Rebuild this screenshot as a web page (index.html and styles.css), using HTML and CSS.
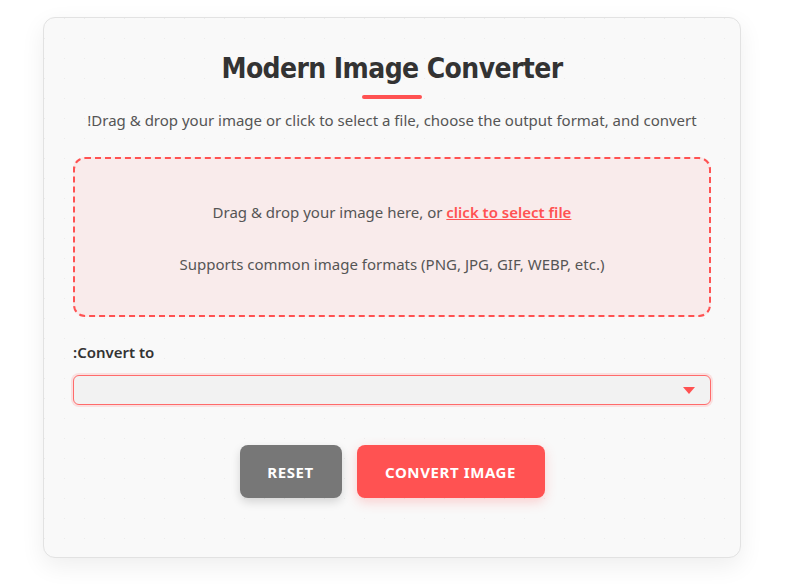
FILE: index.html
```html
<!DOCTYPE html>
<html lang="en">
<head>
<meta charset="utf-8">
<title>Modern Image Converter</title>
<link rel="stylesheet" href="styles.css">
</head>
<body>
<div class="page">
  <main class="card">
    <h1 class="title">Modern Image Converter</h1>
    <div class="title-bar"></div>
    <p class="subtitle">!Drag &amp; drop your image or click to select a file, choose the output format, and convert</p>
    <div class="dropzone">
      <p class="drop-text">Drag &amp; drop your image here, or <a class="drop-link" href="#">click to select file</a></p>
      <p class="drop-hint">Supports common image formats (PNG, JPG, GIF, WEBP, etc.)</p>
    </div>
    <label class="field-label">:Convert to</label>
    <div class="select">
      <svg class="select-arrow" width="12" height="7" viewBox="0 0 12 7"><polygon points="0,0 12,0 6,7" fill="#ff5252"/></svg>
    </div>
    <div class="actions">
      <button class="btn btn-reset">RESET</button>
      <button class="btn btn-convert">CONVERT IMAGE</button>
    </div>
  </main>
</div>
</body>
</html>
```

FILE: styles.css
```css
html, body {
  margin: 0;
  padding: 0;
  background: #ffffff;
}
body {
  font-family: "Noto Sans", "Open Sans", sans-serif;
  color: #555;
}
.page {
  padding: 17px 66px 26px 43px;
}
.card {
  box-sizing: border-box;
  width: 698px;
  height: 541px;
  background-color: #f9f9f9;
  background-image: radial-gradient(circle at 0.5px 0.5px, #ececec 0.8px, transparent 1px);
  background-size: 20px 20px;
  border: 1px solid #e2e2e2;
  border-radius: 12px;
  box-shadow: 0 8px 24px rgba(0, 0, 0, 0.07);
  padding: 33px 29px 0 29px;
  display: flex;
  flex-direction: column;
}
.title {
  margin: 0;
  text-align: center;
  font-family: "DejaVu Sans Condensed", "Noto Sans", sans-serif;
  font-weight: 700;
  font-size: 28px;
  line-height: 36px;
  color: #333;
  letter-spacing: -0.6px;
}
.title-bar {
  width: 60px;
  height: 4px;
  border-radius: 2px;
  background: #ff5252;
  margin: 8px auto 0;
}
.subtitle {
  margin: 10px 0 0;
  text-align: center;
  font-size: 15px;
  line-height: 22px;
  color: #555;
}
.dropzone {
  margin-top: 26px;
  height: 160px;
  box-sizing: border-box;
  border: 2px dashed #ff5252;
  border-radius: 12px;
  background: #f9ebeb;
  padding-top: 2px;
  display: flex;
  flex-direction: column;
  align-items: center;
  justify-content: center;
  gap: 30px;
}
.drop-text, .drop-hint {
  margin: 0;
  font-size: 15px;
  line-height: 22px;
  color: #555;
}
.drop-link {
  color: #ff5252;
  font-weight: 600;
  text-decoration: underline;
}
.field-label {
  margin-top: 24px;
  font-size: 15px;
  font-weight: 600;
  line-height: 22px;
  color: #333;
}
.select {
  margin-top: 12px;
  height: 30px;
  box-sizing: border-box;
  border: 1px solid #ff6b6b;
  border-radius: 6px;
  background: #f2f2f2;
  box-shadow: 0 0 0 2px rgba(255, 82, 82, 0.15);
  display: flex;
  align-items: center;
  justify-content: flex-end;
  padding-right: 15px;
}
.actions {
  margin-top: 40px;
  display: flex;
  justify-content: center;
  gap: 15px;
}
.btn {
  height: 53px;
  border: none;
  border-radius: 8px;
  color: #fff;
  font-family: "Noto Sans", "Open Sans", sans-serif;
  font-weight: 700;
  font-size: 15px;
  letter-spacing: 0.6px;
  padding: 0;
}
.btn-reset {
  width: 102px;
  background: #777777;
  box-shadow: 0 4px 10px rgba(0, 0, 0, 0.15);
}
.btn-convert {
  width: 188px;
  background: #ff5252;
  box-shadow: 0 4px 12px rgba(255, 82, 82, 0.25);
}
```
